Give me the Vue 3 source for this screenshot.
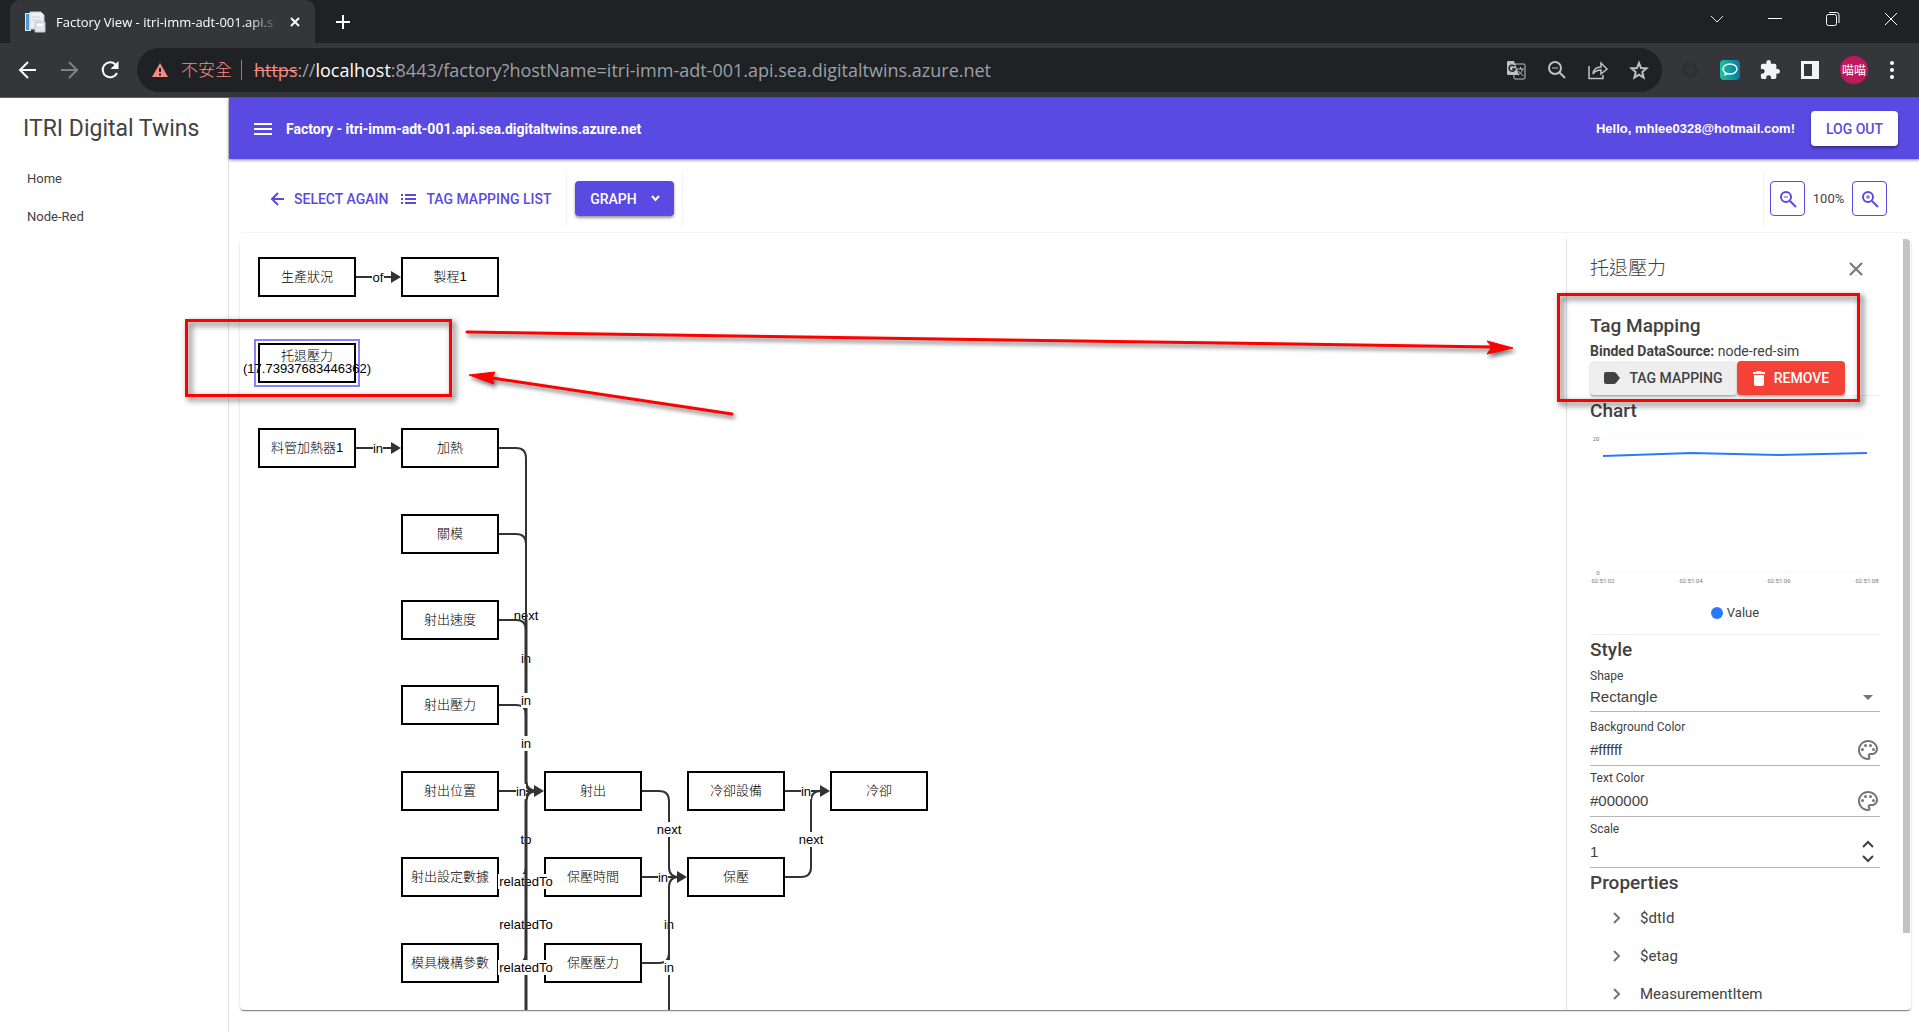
<script setup>
import { ref } from 'vue'

const scale = ref(1)
const shape = ref('Rectangle')
const background = ref('#ffffff')
const textColor = ref('#000000')

const links = ['Home', 'Node-Red']
const properties = ['$dtId', '$etag', 'MeasurementItem']

const nodes = [
  { x: 18, y: 38, name: '生產狀況' },
  { x: 161, y: 38, name: '製程1' },
  { x: 18, y: 209, name: '料管加熱器1' },
  { x: 161, y: 209, name: '加熱' },
  { x: 161, y: 295, name: '關模' },
  { x: 161, y: 381, name: '射出速度' },
  { x: 161, y: 466, name: '射出壓力' },
  { x: 161, y: 552, name: '射出位置' },
  { x: 304, y: 552, name: '射出' },
  { x: 447, y: 552, name: '冷卻設備' },
  { x: 590, y: 552, name: '冷卻' },
  { x: 161, y: 638, name: '射出設定數據' },
  { x: 304, y: 638, name: '保壓時間' },
  { x: 447, y: 638, name: '保壓' },
  { x: 161, y: 724, name: '模具機構參數' },
  { x: 304, y: 724, name: '保壓壓力' },
]

const backEdges = [
  'M259 638H276q10 0 10 -10',
  'M259 724H276q10 0 10 -10',
  'M402 724H419q10 0 10 -10',
]
const thinEdges = [
  'M116 38H152', 'M116 209H152',
  'M259 209H276q10 0 10 10V381',
  'M259 295H276q10 0 10 10',
  'M259 381H276q10 0 10 10',
  'M259 466H276q10 0 10 10',
  'M259 552H296',
  'M402 552H419q10 0 10 10V628q0 10 10 10H440',
  'M402 638H440',
  'M429 771V648q0 -10 10 -10',
  'M545 552H583',
  'M545 638H561q10 0 10 -10V562q0 -10 10 -10',
]
const thickEdges = ['M286 381V542q0 10 10 10', 'M286 771V562q0 -10 10 -10']
const arrows = [[161, 38], [161, 209], [304, 552], [447, 638], [590, 552]]

const backLabels = [
  { x: 286, y: 376, w: 26, text: 'next' },
  { x: 286, y: 419, w: 10, text: 'in' },
  { x: 286, y: 600, w: 11, text: 'to' },
  { x: 286, y: 642, w: 56, text: 'relatedTo' },
  { x: 286, y: 685, w: 56, text: 'relatedTo' },
  { x: 429, y: 685, w: 10, text: 'in' },
]
const frontLabels = [
  { x: 138, y: 38, w: 12, text: 'of' },
  { x: 138, y: 209, w: 10, text: 'in' },
  { x: 286, y: 461, w: 10, text: 'in' },
  { x: 286, y: 504, w: 10, text: 'in' },
  { x: 281, y: 552, w: 10, text: 'in' },
  { x: 286, y: 728, w: 56, text: 'relatedTo' },
  { x: 429, y: 590, w: 26, text: 'next' },
  { x: 423, y: 638, w: 10, text: 'in' },
  { x: 429, y: 728, w: 10, text: 'in' },
  { x: 566, y: 552, w: 10, text: 'in' },
  { x: 571, y: 600, w: 26, text: 'next' },
]
const ticks = [
  { x: 13, t: '02:51:02' }, { x: 101, t: '02:51:04' },
  { x: 189, t: '02:51:06' }, { x: 277, t: '02:51:08' },
]
</script>

<template>
  <div class="window">
    <header class="browser">
      <div class="tabstrip">
        <div class="tab">
          <svg class="favicon" width="22" height="22" viewBox="0 0 22 22">
            <path d="M1 2h6v18H1z" fill="#dfe9f1" /><path d="M2 3h3v16H2z" fill="#4b9bd0" />
            <path d="M6 1h11l3 3v14H6z" fill="#eef0f3" stroke="#c6cbd3" />
            <path d="M8 6h8M8 9h9" stroke="#c9ced8" />
            <path d="M11 11h10v10H11z" fill="#e3e6eb" stroke="#bcc2cc" /><path d="M13 14h6" stroke="#fff" stroke-width="2" />
          </svg>
          <span class="tab-title">Factory View - itri-imm-adt-001.api.s</span>
          <button class="plain" aria-label="Close tab">
            <svg width="12" height="12" viewBox="0 0 12 12"><path d="M2 2l8 8M10 2l-8 8" stroke="#fff" stroke-width="2" /></svg>
          </button>
        </div>
        <button class="plain new-tab" aria-label="New tab">
          <svg width="16" height="16" viewBox="0 0 16 16"><path d="M8 1v14M1 8h14" stroke="#fff" stroke-width="2" /></svg>
        </button>
        <div class="window-controls">
          <button class="plain" aria-label="Search tabs"><svg width="16" height="16" viewBox="0 0 16 16" fill="none" stroke="#e8eaed"><path d="M2 5l6 6 6-6" /></svg></button>
          <button class="plain" aria-label="Minimize"><svg width="16" height="16" viewBox="0 0 16 16"><path d="M1 7.500h14" stroke="#fff" /></svg></button>
          <button class="plain" aria-label="Restore"><svg width="16" height="16" viewBox="0 0 16 16" fill="none" stroke="#fff"><rect x="1.500" y="3.500" width="10" height="11" rx="2" /><path d="M4 1.500h7.500a2.500 2.500 0 0 1 2.500 2.500v8" /></svg></button>
          <button class="plain" aria-label="Close"><svg width="16" height="16" viewBox="0 0 16 16" fill="none" stroke="#fff"><path d="M2 2l12 12M14 2L2 14" /></svg></button>
        </div>
      </div>
      <div class="navbar">
        <div class="nav-buttons">
          <button class="plain" aria-label="Back"><svg width="20" height="20" viewBox="0 0 20 20" fill="none" stroke="#fff" stroke-width="2"><path d="M18 10H3M10 2l-8 8 8 8" /></svg></button>
          <button class="plain" aria-label="Forward"><svg width="20" height="20" viewBox="0 0 20 20" fill="none" stroke="#808286" stroke-width="2"><path d="M2 10h15M10 2l8 8-8 8" /></svg></button>
          <button class="plain" aria-label="Reload"><svg width="20" height="20" viewBox="0 0 20 20"><path d="M17 13a7.500 7.500 0 1 1-1.500-8.500L17 6" fill="none" stroke="#fff" stroke-width="2" /><path d="M18.500 1v8h-8z" fill="#fff" /></svg></button>
        </div>
        <div class="omnibox">
          <svg width="16" height="14" viewBox="0 0 16 14"><path d="M8 0l8 14H0z" fill="#f28b82" /><path d="M8 5v4M8 10.500v2" stroke="#202124" stroke-width="2" /></svg>
          <span class="insecure">不安全</span>
          <span class="url"><span class="scheme">https</span>://<span class="host">localhost</span>:8443/factory?hostName=itri-imm-adt-001.api.sea.digitaltwins.azure.net</span>
          <div class="omni-actions">
            <button class="plain" aria-label="Translate">
              <svg width="20" height="20" viewBox="0 0 20 20"><rect x="8" y="4" width="11" height="15" rx="1" fill="none" stroke="#bdc1c6" stroke-width="1" /><path d="M2 1h6l5 14H2a1 1 0 0 1-1-1V2a1 1 0 0 1 1-1z" fill="#bdc1c6" /><path d="M8.500 6.500A3 3 0 1 0 9 9H6" fill="none" stroke="#202124" stroke-width="1.500" /><path d="M11 9h7M14.500 7v2M16.500 9c-1 4-3 5-4 6M12.500 11c1 2 3 3 5 5" stroke="#bdc1c6" fill="none" /></svg>
            </button>
            <button class="plain" aria-label="Zoom"><svg width="20" height="20" viewBox="0 0 20 20" fill="none" stroke="#bdc1c6" stroke-width="2"><circle cx="8" cy="8" r="6" /><path d="M12 12l6 6" /><path d="M5 8h6" stroke-width="1" /></svg></button>
            <button class="plain" aria-label="Share"><svg width="20" height="20" viewBox="0 0 20 20" fill="none" stroke="#bdc1c6" stroke-width="1.500"><path d="M1 6v12.500h14V15" /><path d="M5 14c.5-5 3-7 8-7V3l6 6-6 5v-4c-4 0-6 1-8 4z" /></svg></button>
            <button class="plain" aria-label="Bookmark"><svg width="20" height="20" viewBox="0 0 20 20" fill="none" stroke="#bdc1c6" stroke-width="2"><path d="M10 3l2 5 5.500.4-4.200 3.600 1.300 5.500L10 14.600l-4.600 2.900L6.700 12 2.500 8.400 8 8z" /></svg></button>
          </div>
        </div>
        <div class="extensions">
          <button class="plain" aria-label="Extension"><svg width="20" height="20" viewBox="0 0 20 20"><circle cx="10" cy="10" r="6" fill="none" stroke="#2f3034" stroke-width="5" stroke-dasharray="5 1" /></svg></button>
          <button class="plain" aria-label="Chat">
            <svg width="20" height="20" viewBox="0 0 20 20"><defs><linearGradient id="teal"><stop offset="0" stop-color="#1fc19c" /><stop offset="1" stop-color="#0b76a0" /></linearGradient></defs><rect width="20" height="20" rx="4" fill="url(#teal)" /><ellipse cx="10" cy="9" rx="7" ry="5" fill="none" stroke="#e5fffa" stroke-width="1.500" /><path d="M5 12l-1 4 5-2" fill="#e5fffa" /></svg>
          </button>
          <button class="plain" aria-label="Extensions"><svg width="20" height="20" viewBox="1 1 22 22" fill="#f1f3f4"><path d="M20.500 11H19V7a2 2 0 0 0-2-2h-4V3.500a2.500 2.500 0 0 0-5 0V5H4a2 2 0 0 0-2 2v3.800h1.500a2.700 2.700 0 0 1 0 5.400H2V20a2 2 0 0 0 2 2h3.800v-1.500a2.700 2.700 0 0 1 5.400 0V22H17a2 2 0 0 0 2-2v-4h1.500a2.500 2.500 0 0 0 0-5z" /></svg></button>
          <button class="plain" aria-label="Side panel"><svg width="20" height="20" viewBox="0 0 20 20"><path d="M1 1h18v18H1zM4 4v12h8V4z" fill="#f1f3f4" fill-rule="evenodd" /></svg></button>
          <button class="plain avatar">喵喵</button>
          <button class="plain menu-dots" aria-label="Menu"><svg width="8" height="20" viewBox="0 0 8 20" fill="#fff"><circle cx="4" cy="3" r="2" /><circle cx="4" cy="10" r="2" /><circle cx="4" cy="17" r="2" /></svg></button>
        </div>
      </div>
    </header>

    <div class="app">
      <aside class="drawer">
        <h1>ITRI Digital Twins</h1>
        <nav><a v-for="l in links" :key="l" href="#">{{ l }}</a></nav>
      </aside>
      <div class="main">
        <header class="appbar">
          <button class="plain" aria-label="Toggle drawer"><svg width="18" height="12" viewBox="0 0 18 12"><path d="M0 1h18M0 6h18M0 11h18" stroke="#fff" stroke-width="2" /></svg></button>
          <b class="appbar-title">Factory - itri-imm-adt-001.api.sea.digitaltwins.azure.net</b>
          <b class="hello">Hello, mhlee0328@hotmail.com!</b>
          <button class="btn logout">LOG OUT</button>
        </header>

        <div class="toolbar">
          <button class="btn text back">
            <svg width="14" height="14" viewBox="0 0 14 14" fill="none" stroke="currentColor" stroke-width="2"><path d="M14 7H2M8 1L2 7l6 6" /></svg>SELECT AGAIN
          </button>
          <button class="btn text">
            <svg width="15" height="10" viewBox="0 0 15 10" stroke="currentColor" stroke-width="2"><path d="M0 1h2M4 1h11M0 5h2M4 5h11M0 9h2M4 9h11" /></svg>TAG MAPPING LIST
          </button>
          <div class="graph-slot">
            <button class="btn graph">GRAPH<svg width="9" height="7" viewBox="0 0 9 7" fill="none" stroke="#fff" stroke-width="2"><path d="M1 1l3.500 4L8 1" /></svg></button>
          </div>
          <div class="zoom">
            <button class="icon-btn" aria-label="Zoom out"><svg width="18" height="18" viewBox="0 0 18 18" fill="none" stroke="currentColor" stroke-width="2"><circle cx="7" cy="7" r="5" /><path d="M11 11l6 6" /><path d="M5 7h4" stroke-width="1" /></svg></button>
            <span>100%</span>
            <button class="icon-btn" aria-label="Zoom in"><svg width="18" height="18" viewBox="0 0 18 18" fill="none" stroke="currentColor" stroke-width="2"><circle cx="7" cy="7" r="5" /><path d="M11 11l6 6" /><path d="M5 7h4M7 5v4" stroke-width="1" /></svg></button>
          </div>
        </div>

        <section class="card">
          <svg class="graph-canvas">
            <g class="edge"><path v-for="d in backEdges" :key="d" :d="d" /></g>
            <g v-for="n in nodes" :key="n.name">
              <rect class="node" :x="n.x + 1" :y="n.y - 19" width="96" height="38" />
              <text :x="n.x + 49" :y="n.y - 1">{{ n.name }}</text>
            </g>
            <rect x="15" y="101" width="104" height="46" fill="none" stroke="#8b7ff5" stroke-width="2" />
            <rect class="node" x="19" y="105" width="96" height="38" />
            <text x="67" y="116">托退壓力</text>
            <text x="67" y="129">(17.73937683446362)</text>
            <g v-for="(l, i) in backLabels" :key="'b' + i">
              <rect :x="l.x - l.w / 2" :y="l.y - 7" :width="l.w" height="15" fill="#fff" />
              <text :x="l.x" :y="l.y">{{ l.text }}</text>
            </g>
            <g class="edge"><path v-for="d in thinEdges" :key="d" :d="d" /></g>
            <g class="edge thick"><path v-for="d in thickEdges" :key="d" :d="d" /></g>
            <path v-for="([x, y], i) in arrows" :key="i" :d="`M${x} ${y}l-10 -6v12z`" fill="#333" />
            <g v-for="(l, i) in frontLabels" :key="'f' + i">
              <rect :x="l.x - l.w / 2" :y="l.y - 7" :width="l.w" height="15" fill="#fff" />
              <text :x="l.x" :y="l.y">{{ l.text }}</text>
            </g>
          </svg>

          <aside class="panel">
            <div class="panel-body">
              <div class="panel-head">
                <h2>托退壓力</h2>
                <button class="plain" aria-label="Close panel"><svg width="14" height="14" viewBox="0 0 14 14"><path d="M1 1l12 12M13 1L1 13" stroke="#757575" stroke-width="2" /></svg></button>
              </div>
              <h3 class="first">Tag Mapping</h3>
              <p class="source"><b>Binded DataSource:</b> node-red-sim</p>
              <div class="actions">
                <button class="btn mapping"><svg width="16" height="12" viewBox="0 0 16 12"><path d="M2 0h8q1 0 2 1l4 5-4 5q-1 1-2 1H2q-2 0-2-2V2q0-2 2-2z" fill="#424242" /></svg>TAG MAPPING</button>
                <button class="btn remove"><svg width="12" height="15" viewBox="0 0 12 15" fill="#fff"><path d="M0 1h3l1-1h4l1 1h3v2H0zM1 4h10v9q0 2-2 2H3q-2 0-2-2z" /></svg>REMOVE</button>
              </div>
              <hr>
              <h3>Chart</h3>
              <svg class="chart" width="290" height="172" viewBox="0 0 290 172">
                <path d="M13 12H277M13 146H277" stroke="#f8f8f8" />
                <polyline points="13,30 101,27 189,29 277,27" fill="none" stroke="#2979ff" stroke-width="2" />
                <text x="6" y="12">20</text><text x="8" y="146">0</text>
                <text v-for="k in ticks" :key="k.t" :x="k.x" y="154">{{ k.t }}</text>
              </svg>
              <div class="legend"><i></i>Value</div>
              <hr>
              <h3>Style</h3>
              <div class="field shape">
                <label for="shape">Shape</label>
                <div class="control">
                  <select id="shape" v-model="shape"><option>Rectangle</option></select>
                  <svg width="24" height="10" viewBox="0 0 24 10"><path d="M7 4h10l-5 5z" fill="#757575" /></svg>
                </div>
              </div>
              <div class="field">
                <label for="bg">Background Color</label>
                <div class="control">
                  <input id="bg" v-model="background" type="text">
                  <button class="plain" aria-label="Pick background color"><svg width="24" height="24" viewBox="0 0 24 24" fill="#757575"><path d="M12 22C6.490 22 2 17.510 2 12S6.490 2 12 2s10 4.040 10 9c0 3.310-2.690 6-6 6h-1.770c-.28 0-.5.22-.5.5 0 .12.05.23.13.33.41.47.64 1.060.64 1.670A2.500 2.500 0 0 1 12 22zm0-18c-4.410 0-8 3.590-8 8s3.590 8 8 8c.28 0 .5-.22.5-.5a.54.54 0 0 0-.14-.35c-.41-.46-.63-1.050-.63-1.650a2.500 2.500 0 0 1 2.500-2.500H16c2.210 0 4-1.790 4-4 0-3.860-3.590-7-8-7z" /><circle cx="6.500" cy="11.500" r="1.500" /><circle cx="9.500" cy="7.500" r="1.500" /><circle cx="14.500" cy="7.500" r="1.500" /><circle cx="17.500" cy="11.500" r="1.500" /></svg></button>
                </div>
              </div>
              <div class="field">
                <label for="fg">Text Color</label>
                <div class="control">
                  <input id="fg" v-model="textColor" type="text">
                  <button class="plain" aria-label="Pick text color"><svg width="24" height="24" viewBox="0 0 24 24" fill="#757575"><path d="M12 22C6.490 22 2 17.510 2 12S6.490 2 12 2s10 4.040 10 9c0 3.310-2.690 6-6 6h-1.770c-.28 0-.5.22-.5.5 0 .12.05.23.13.33.41.47.64 1.060.64 1.670A2.500 2.500 0 0 1 12 22zm0-18c-4.410 0-8 3.590-8 8s3.590 8 8 8c.28 0 .5-.22.5-.5a.54.54 0 0 0-.14-.35c-.41-.46-.63-1.050-.63-1.650a2.500 2.500 0 0 1 2.500-2.500H16c2.210 0 4-1.790 4-4 0-3.860-3.590-7-8-7z" /><circle cx="6.500" cy="11.500" r="1.500" /><circle cx="9.500" cy="7.500" r="1.500" /><circle cx="14.500" cy="7.500" r="1.500" /><circle cx="17.500" cy="11.500" r="1.500" /></svg></button>
                </div>
              </div>
              <div class="field">
                <label for="scale">Scale</label>
                <div class="control">
                  <input id="scale" v-model="scale" type="number">
                  <div class="spin">
                    <button class="plain" aria-label="Increase" @click="scale++"><svg width="24" height="8" viewBox="0 0 24 8" fill="none" stroke="#424242" stroke-width="2"><path d="M7 7l5-5 5 5" /></svg></button>
                    <button class="plain" aria-label="Decrease" @click="scale--"><svg width="24" height="8" viewBox="0 0 24 8" fill="none" stroke="#424242" stroke-width="2"><path d="M7 1l5 5 5-5" /></svg></button>
                  </div>
                </div>
              </div>
              <h3>Properties</h3>
              <ul>
                <li v-for="p in properties" :key="p">
                  <svg width="8" height="12" viewBox="0 0 8 12" fill="none" stroke="#757575" stroke-width="2"><path d="M1 1l5 5-5 5" /></svg>{{ p }}
                </li>
              </ul>
            </div>
            <div class="scroll"><div class="thumb"></div></div>
          </aside>
        </section>
      </div>
    </div>

    <div class="annotations">
      <div class="mark node-mark"></div>
      <div class="mark panel-mark"></div>
      <svg>
        <g fill="#f00" stroke="#f00">
          <path d="M467 332L1492 347M732 414L492 378" stroke-width="3" stroke-linecap="round" />
          <path d="M1513 348l-26-7 5 6-5 7zM469 375l26-3-3 6 2 6z" />
        </g>
      </svg>
    </div>
  </div>
</template>

<style>
body { margin: 0; }
</style>

<style scoped>
* { box-sizing: border-box; }
.window { position: relative; height: 100vh; display: flex; flex-direction: column; overflow: hidden; background: #fff; color: #424242; font: 13px/20px Roboto, "Noto Sans CJK TC", sans-serif; }
button { font-family: inherit; cursor: pointer; }
svg { display: block; flex: none; }
.plain { display: flex; align-items: center; justify-content: center; padding: 0; border: 0; background: none; }

.browser { flex: none; background: #35363a; border-bottom: 1px solid #606166; font-family: "Open Sans", "Noto Sans CJK TC", sans-serif; }
.tabstrip { display: flex; align-items: center; height: 43px; padding-left: 10px; background: #202124; }
.tab { display: flex; align-items: center; align-self: stretch; width: 305px; padding: 0 14px; border-radius: 10px 10px 0 0; background: #35363a; color: #fff; }
.tab-title { flex: 1; margin: 0 8px 0 10px; white-space: nowrap; font-size: 13px; mask-image: linear-gradient(90deg, #000 85%, transparent); }
.new-tab { margin-left: 20px; }
.window-controls { display: flex; gap: 42px; margin: -6px 20px 0 auto; }
.navbar { display: flex; align-items: center; height: 54px; padding-right: 23px; }
.nav-buttons { display: flex; gap: 21px; width: 137px; padding-left: 18px; }
.omnibox { flex: 1; display: flex; align-items: center; height: 44px; padding: 0 13px 0 15px; border-radius: 22px; background: #202124; color: #9aa0a6; }
.insecure { margin: 0 9px 0 13px; padding-right: 9px; border-right: 1px solid #80868b; color: #f28b82; font-size: 17px; font-weight: 300; }
.url { margin-left: 3px; font-size: 18px; white-space: nowrap; }
.scheme { color: #f28b82; text-decoration: line-through; }
.host { color: #fff; }
.omni-actions { display: flex; gap: 21px; margin-left: auto; }
.extensions { display: flex; align-items: center; gap: 20px; margin-left: 18px; }
.avatar { width: 28px; height: 28px; border-radius: 50%; background: #c2185b; color: #fff; font-size: 12px; }

.app { flex: 1; display: flex; min-height: 0; }
.drawer { flex: none; width: 229px; border-right: 1px solid #e0e0e0; }
h1 { margin: 0; padding: 0 23px; font-size: 23px; line-height: 62px; font-weight: 400; }
nav { display: flex; flex-direction: column; }
nav a { padding: 0 27px; line-height: 38px; color: #424242; text-decoration: none; }
.main { flex: 1; display: flex; flex-direction: column; min-width: 0; }
.appbar { flex: none; display: flex; align-items: center; height: 61px; padding: 0 21px 0 25px; background: #594ae2; color: #fff; box-shadow: 0 1px 3px rgba(0, 0, 0, .5); }
.appbar-title { margin-left: 14px; font-size: 14px; }
.hello { margin: 0 16px 0 auto; font-family: "Liberation Sans", sans-serif; }
.btn { display: flex; align-items: center; justify-content: center; height: 35px; padding: 0 15px; border: 0; border-radius: 4px; font-size: 14px; font-weight: 500; white-space: nowrap; }
.logout { width: 87px; padding: 0; background: #fff; color: #594ae2; box-shadow: 0 2px 3px rgba(0, 0, 0, .4); }

.toolbar { flex: none; display: flex; align-items: center; height: 74px; margin: 0 8px 0 11px; padding: 6px 0 0 30px; border-bottom: 1px solid #f3f3f3; }
.btn.text { gap: 10px; padding: 0; background: none; color: #594ae2; }
.back { margin-right: 13px; }
.graph-slot { display: flex; align-items: center; height: 56px; margin-left: 15px; padding: 0 8px; border: solid #f3f3f3; border-width: 0 1px; }
.graph { gap: 14px; width: 99px; background: #594ae2; color: #fff; box-shadow: 0 2px 3px rgba(0, 0, 0, .4); }
.zoom { display: flex; align-items: center; height: 56px; margin-left: auto; padding: 0 24px 0 6px; border-left: 1px solid #f3f3f3; }
.zoom span { width: 47px; text-align: center; }
.icon-btn { display: flex; align-items: center; justify-content: center; width: 35px; height: 35px; padding: 0; border: 1px solid #594ae2; border-radius: 4px; background: none; color: #594ae2; }

.card { flex: 1; display: flex; min-height: 0; margin: 6px 8px 22px 11px; border-radius: 4px; box-shadow: 0 2px 1px -1px rgba(0, 0, 0, .3), 0 1px 1px rgba(0, 0, 0, .2), 0 1px 3px rgba(0, 0, 0, .12); overflow: hidden; }
.graph-canvas { flex: 1; height: 100%; min-width: 0; }
.graph-canvas text { fill: #000; font-family: "Liberation Sans", "Noto Sans CJK TC", sans-serif; font-size: 13px; font-weight: 300; text-anchor: middle; dominant-baseline: central; }
.node { fill: #fff; stroke: #000; stroke-width: 2; }
.edge { fill: none; stroke: #333; stroke-width: 2; }
.thick { stroke-width: 3; }

.panel { flex: none; display: flex; width: 345px; border-left: 1px solid #e0e0e0; }
.panel-body { flex: 1; padding: 0 23px; overflow: hidden; }
.scroll { width: 8px; }
.thumb { width: 7px; height: 90%; border-radius: 0 4px 0 0; background: #c3c3c3; }
.panel-head { display: flex; align-items: center; justify-content: space-between; height: 60px; padding-right: 17px; }
h2 { margin: 0; font-size: 19px; font-weight: 300; }
h3 { margin: 0; font-size: 19px; line-height: 30px; font-weight: 500; }
.first { margin-top: 12px; }
.source { margin: 0; font-size: 14px; }
.actions { display: flex; }
.actions .btn { height: 34px; gap: 9px; padding: 0; }
.mapping { width: 147px; background: #eee; color: #424242; box-shadow: 0 2px 2px rgba(0, 0, 0, .25); }
.remove { width: 108px; background: #f44336; color: #fff; box-shadow: 0 2px 2px rgba(0, 0, 0, .25); }
hr { height: 1px; margin: 0; border: 0; background: #eee; }
.chart text { fill: #757575; font-size: 6px; text-anchor: middle; dominant-baseline: central; }
.legend { display: flex; align-items: center; justify-content: center; gap: 4px; height: 30px; margin-bottom: 6px; }
.legend i { width: 12px; height: 12px; border-radius: 50%; background: #2979ff; }
.field { margin-top: 1px; }
.field label { display: block; font-size: 12px; line-height: 22px; }
.control { display: flex; align-items: center; height: 28px; padding-bottom: 4px; border-bottom: 1px solid #b5b5b5; }
.shape { margin: 0 0 4px; }
.shape .control { height: 25px; padding-bottom: 6px; }
.control input, .control select { flex: 1; min-width: 0; height: 20px; margin: 0; padding: 0; border: 0; outline: 0; background: none; appearance: none; color: #424242; font: 15px "Liberation Sans", sans-serif; }
.control input[type="number"] { appearance: textfield; }
.spin { display: flex; flex-direction: column; gap: 7px; }
ul { margin: 1px 0 0; padding: 0; list-style: none; }
li { display: flex; align-items: center; gap: 19px; height: 38px; padding-left: 23px; font-size: 15px; white-space: nowrap; }

.annotations { position: absolute; inset: 0; pointer-events: none; }
.annotations svg { width: 100%; height: 100%; filter: drop-shadow(2px 3px 2px rgba(0, 0, 0, .55)); }
.mark { position: absolute; border: 3px solid #f00; filter: drop-shadow(3px 3px 3px rgba(0, 0, 0, .7)); }
.node-mark { left: 185px; top: 319px; width: 267px; height: 78px; }
.panel-mark { right: 59px; top: 293px; width: 303px; height: 109px; }
</style>
